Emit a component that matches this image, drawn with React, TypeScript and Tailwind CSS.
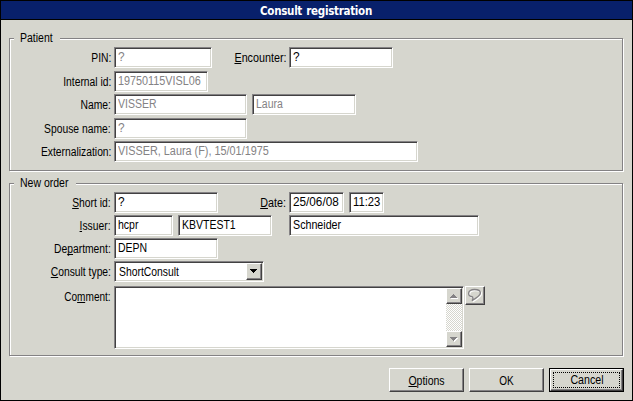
import type { ReactNode } from 'react';

const raised =
  'bg-[#d6d6ce] border border-t-white border-l-white border-b-[#424142] border-r-[#424142] shadow-[inset_-1px_-1px_0_#848284]';

const sunken =
  'bg-white border border-t-[#848284] border-l-[#848284] border-b-white border-r-white shadow-[inset_1px_1px_0_#424142,inset_-1px_-1px_0_#d6d6ce]';

const bubble =
  'M5.5 8.8C3 8.6 1.6 7.2 1.6 5.3C1.6 3 4 1.5 7.5 1.5S13.4 2.8 13.4 5C13.4 7.6 9.5 10 5 12.6C6.2 11.2 6.4 10 5.5 8.8z';

function Label({
  children,
  className = 'w-[101px]',
  fit = 'scale-x-[.825]',
}: {
  children: ReactNode;
  className?: string;
  fit?: string;
}) {
  return (
    <label className={`flex shrink-0 justify-end pt-[3px] ${className}`}>
      <span className={`block origin-right ${fit}`}>{children}</span>
    </label>
  );
}

function Key({ children }: { children: ReactNode }) {
  return <span className="inline-block h-[14px] border-b border-black leading-[16px]">{children}</span>;
}

function Field({
  value,
  className,
  disabled,
  fit = 'scale-x-[.84]',
}: {
  value: string;
  className: string;
  disabled?: boolean;
  fit?: string;
}) {
  return (
    <div className={`flex h-[21px] shrink-0 pt-px pl-[2.5px] ${sunken} ${disabled ? 'text-[#848284]' : 'text-black'} ${className}`}>
      <span className={`block origin-left ${fit}`}>{value}</span>
    </div>
  );
}

function Group({
  title,
  gap,
  className,
  children,
}: {
  title: string;
  gap: string;
  className: string;
  children: ReactNode;
}) {
  return (
    <section
      className={`relative w-[614px] border border-[#848284] shadow-[1px_1px_0_#fff,inset_1px_1px_0_#fff] ${className}`}
    >
      <h2 className={`absolute top-[-9px] left-[4px] bg-[#d6d6ce] pl-[6px] ${gap}`}>
        <span className="block origin-left scale-x-[.84]">{title}</span>
      </h2>
      {children}
    </section>
  );
}

function Arrow({ up, etched }: { up?: boolean; etched?: boolean }) {
  const d = up ? 'M3 0h1v1h1v1h1v1h1v1H0V3h1V2h1V1h1z' : 'M0 0h7v1H6v1H5v1H4v1H3V3H2V2H1V1H0z';
  return (
    <svg width="8" height="5" viewBox="0 0 8 5" shapeRendering="crispEdges">
      {etched && <path d={d} fill="#fff" transform="translate(1 1)" />}
      <path d={d} fill={etched ? '#848284' : '#000'} />
    </svg>
  );
}

function Row({ children, className = '' }: { children: ReactNode; className?: string }) {
  return <div className={`flex h-[21px] ${className}`}>{children}</div>;
}

export default function App() {
  return (
    <main className="flex h-[401px] w-[633px] flex-col overflow-hidden border border-black bg-[#d6d6ce] font-['Liberation_Sans',sans-serif] text-[12.5px] leading-[16px] whitespace-pre text-black">
      <header className="h-[19px] shrink-0 border-b border-black bg-[#08206b] pr-px text-center font-['DejaVu_Sans_Condensed','DejaVu_Sans',sans-serif] text-[11.5px] leading-[20px] font-bold tracking-[-0.3px] [word-spacing:1px] text-white">
        Consult registration
      </header>

      <Group title="Patient" gap="w-[46px]" className="mt-[18px] ml-[8px] h-[133px] shrink-0 pt-[8px]">
        <Row>
          <Label>PIN:</Label>
          <Field value="?" disabled className="ml-[3px] w-[98px]" fit="scale-x-[.95]" />
          <Label className="w-[74px]" fit="scale-x-[.86]"><Key>E</Key>ncounter:</Label>
          <Field value="?" className="ml-[3px] w-[104px]" fit="scale-x-[.95]" />
        </Row>
        <Row className="mt-[3px]">
          <Label>Internal id:</Label>
          <Field value="19750115VISL06" disabled className="ml-[3px] w-[94px]" fit="scale-x-[.865]" />
        </Row>
        <Row className="mt-[2px]">
          <Label>Name:</Label>
          <Field value="VISSER" disabled className="ml-[3px] w-[133px]" />
          <Field value="Laura" disabled className="ml-[5px] w-[104px]" />
        </Row>
        <Row className="mt-[3px]">
          <Label>Spouse name:</Label>
          <Field value="?" disabled className="ml-[3px] w-[133px]" fit="scale-x-[.95]" />
        </Row>
        <Row className="mt-[2px]">
          <Label>Externalization:</Label>
          <Field value="VISSER, Laura (F), 15/01/1975" disabled className="ml-[3px] w-[304px]" fit="scale-x-[.868]" />
        </Row>
      </Group>

      <Group title="New order" gap="w-[62px]" className="mt-[12px] ml-[8px] h-[173px] shrink-0 pt-[8px]">
        <Row>
          <Label><Key>S</Key>hort id:</Label>
          <Field value="?" className="ml-[3px] w-[104px]" fit="scale-x-[.95]" />
          <Label className="w-[68px]" fit="scale-x-[.86]"><Key>D</Key>ate:</Label>
          <Field value="25/06/08" className="ml-[3px] w-[55px]" fit="scale-x-[.94]" />
          <Field value="11:23" className="ml-[5px] w-[35px]" fit="scale-x-[.9]" />
        </Row>
        <Row className="mt-[2px]">
          <Label><Key>I</Key>ssuer:</Label>
          <Field value="hcpr" className="ml-[3px] w-[59px]" />
          <Field value="KBVTEST1" className="ml-[5px] w-[94px]" />
          <Field value="Schneider" className="ml-[17px] w-[190px]" fit="scale-x-[.855]" />
        </Row>
        <Row className="mt-[2px]">
          <Label>De<Key>p</Key>artment:</Label>
          <Field value="DEPN" className="ml-[3px] w-[104px]" />
        </Row>
        <Row className="mt-[2px]">
          <Label><Key>C</Key>onsult type:</Label>
          <div className={`ml-[3px] flex h-[21px] w-[150px] justify-between p-px pl-[3.5px] ${sunken}`}>
            <span className="block origin-left scale-x-[.83] pt-px">ShortConsult</span>
            <button className={`flex h-[17px] w-[16px] justify-center pt-[5px] ${raised}`}>
              <Arrow />
            </button>
          </div>
        </Row>
        <div className="mt-[4px] flex h-[63px]">
          <Label fit="scale-x-[.805]">Co<Key>m</Key>ment:</Label>
          <div className={`ml-[3px] flex w-[350px] shrink-0 justify-end p-px ${sunken}`}>
            <div className="flex w-[16px] flex-col justify-between bg-[repeating-conic-gradient(#fff_0_25%,#d6d6ce_0_50%)] bg-size-[2px_2px]">
              <button className={`flex h-[16px] justify-center pt-[5px] ${raised}`}>
                <Arrow up etched />
              </button>
              <button className={`flex h-[16px] justify-center pt-[5px] ${raised}`}>
                <Arrow etched />
              </button>
            </div>
          </div>
          <button className={`ml-px flex h-[19px] w-[20px] shrink-0 pt-px pl-px ${raised}`}>
            <svg width="16" height="15" viewBox="0 0 16 15" fill="none" strokeWidth="1.3">
              <path d={bubble} stroke="#fff" transform="translate(1 1)" />
              <path d={bubble} stroke="#848284" />
            </svg>
          </button>
        </div>
      </Group>

      <footer className="mt-[12px] ml-[388px] flex h-[24px] shrink-0 gap-[5px] text-center">
        <button className={`w-[75px] pt-px ${raised}`}>
          <span className="block scale-x-[.84]"><Key>O</Key>ptions</span>
        </button>
        <button className={`w-[75px] pt-px ${raised}`}>
          <span className="block scale-x-[.8]">OK</span>
        </button>
        <div className="w-[75px] border border-black">
          <button className={`h-full w-full p-[2px] ${raised}`}>
            <span className="block h-[16px] border border-dotted border-black pl-px leading-[15px]">
              <span className="block scale-x-[.85]">Cancel</span>
            </span>
          </button>
        </div>
      </footer>
    </main>
  );
}
